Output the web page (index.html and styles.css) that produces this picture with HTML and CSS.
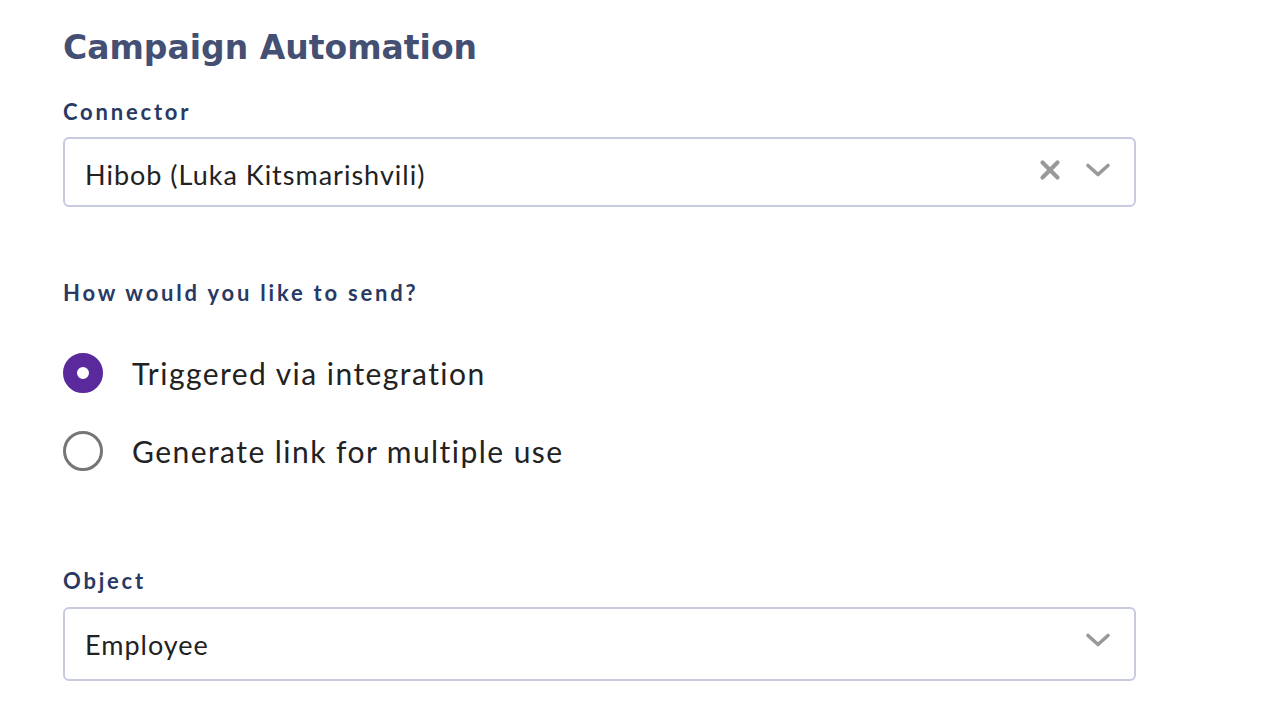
FILE: index.html
```html
<!DOCTYPE html>
<html>
<head>
<meta charset="utf-8">
<link rel="stylesheet" href="styles.css">
</head>
<body>
<div class="page">
  <h1 class="title">Campaign Automation</h1>

  <div class="field connector">
    <div class="label">Connector</div>
    <div class="select">
      <span class="value">Hibob (Luka Kitsmarishvili)</span>
      <span class="icons">
        <svg class="clear" width="22" height="26" viewBox="0 0 22 26"><path d="M3.5 5.5 L18.5 20.5 M18.5 5.5 L3.5 20.5" stroke="#999999" stroke-width="4.2" stroke-linecap="round"/></svg>
        <svg class="chev" width="26" height="26" viewBox="0 0 26 26"><path d="M3 8.5 L13 17.5 L23 8.5" fill="none" stroke="#999999" stroke-width="3.6" stroke-linecap="round" stroke-linejoin="round"/></svg>
      </span>
    </div>
  </div>

  <div class="field send">
    <div class="label">How would you like to send?</div>
    <div class="radios">
      <div class="radio checked"><span class="dot"></span><span class="rtext">Triggered via integration</span></div>
      <div class="radio"><span class="dot"></span><span class="rtext">Generate link for multiple use</span></div>
    </div>
  </div>

  <div class="field object">
    <div class="label">Object</div>
    <div class="select tall">
      <span class="value">Employee</span>
      <span class="icons">
        <svg class="chev" width="26" height="26" viewBox="0 0 26 26"><path d="M3 8.5 L13 17.5 L23 8.5" fill="none" stroke="#999999" stroke-width="3.6" stroke-linecap="round" stroke-linejoin="round"/></svg>
      </span>
    </div>
  </div>
</div>
</body>
</html>
```
FILE: styles.css
```css
html, body {
  margin: 0;
  padding: 0;
  background: #ffffff;
}
body {
  font-family: "Lato", "Liberation Sans", sans-serif;
}
.page {
  width: 1073px;
  padding: 28px 0 0 63px;
}
.title {
  margin: 0;
  font-family: "DejaVu Sans", "Lato", sans-serif;
  font-weight: 700;
  font-size: 33px;
  line-height: 40px;
  color: #444f74;
}
.label {
  font-size: 22px;
  font-weight: 700;
  color: #283a64;
  letter-spacing: 2.8px;
  line-height: 26px;
}
.connector {
  margin-top: 31px;
}
.select {
  margin-top: 12px;
  height: 70px;
  box-sizing: border-box;
  border: 2px solid #c8cbdf;
  border-radius: 6px;
  display: flex;
  align-items: flex-start;
  padding: 18px 23px 0 20px;
}
.select.tall {
  height: 74px;
  margin-top: 13px;
}
.value {
  flex: 1;
  margin-top: 2px;
  font-size: 27px;
  line-height: 32px;
  letter-spacing: 1px;
  color: #222222;
}
.icons {
  display: flex;
  align-items: center;
  gap: 24px;
}
.icons svg {
  display: block;
}
.send {
  margin-top: 73px;
}
.radios {
  margin-top: 47px;
  display: flex;
  flex-direction: column;
  gap: 38px;
}
.radio {
  display: flex;
  align-items: center;
  height: 40px;
}
.dot {
  flex: none;
  width: 40px;
  height: 40px;
  box-sizing: border-box;
  border: 3.5px solid #767676;
  border-radius: 50%;
  margin-right: 29px;
}
.radio.checked .dot {
  border: 14px solid #5a2a9c;
}
.rtext {
  font-size: 30px;
  letter-spacing: 1.45px;
  color: #222222;
}
.object {
  margin-top: 97px;
}
```
